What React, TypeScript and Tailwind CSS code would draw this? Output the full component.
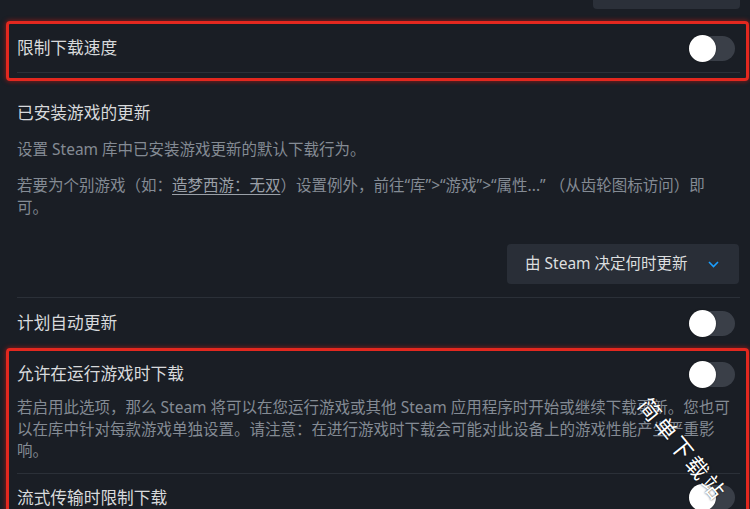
import React from "react";

const Toggle = () => (
  <div className="relative w-[46px] h-[25px] rounded-full bg-[#3a3f48] mr-[5px] shrink-0">
    <div className="absolute left-0 top-[-1px] w-[27px] h-[27px] rounded-full bg-white shadow-[0_0_2px_rgba(0,0,0,0.4)]" />
  </div>
);

const Divider = ({ className = "" }: { className?: string }) => (
  <div className={"h-px bg-[#2b3038] " + className} />
);

export default function App() {
  return (
    <div
      className="relative w-[750px] h-[509px] overflow-hidden bg-[#1a1e25] pl-[6px] pr-[1px] [text-spacing-trim:space-all]"
      style={{ fontFamily: '"Noto Sans", "Noto Sans CJK SC", sans-serif' }}
    >
      {/* previous row button (cropped) */}
      <div className="h-[9px] flex justify-end pr-[9px]">
        <div className="w-[147px] h-[9px] bg-[#2b3039] rounded-b-[4px]" />
      </div>

      {/* box 1 */}
      <div className="mt-[12px] border-[3px] border-[#e3281f] rounded-[4px] shadow-[0_0_4px_1px_rgba(190,25,20,0.55)] pl-[8px] pr-[6px] pb-[5px]">
        <div className="h-[48px] flex items-center justify-between">
          <span className="text-[16.7px] leading-[24px] text-[#d8dadc]">限制下载速度</span>
          <Toggle />
        </div>
        <Divider />
      </div>

      {/* installed game updates */}
      <div className="mt-[20px] pl-[11px] pr-[9px]">
        <div className="text-[16.7px] leading-[24px] text-[#d8dadc]">已安装游戏的更新</div>
        <div className="mt-[13px] text-[15.5px] leading-[22px] text-[#848b94]">
          设置 Steam 库中已安装游戏更新的默认下载行为。
        </div>
        <div className="mt-[14px] text-[15.5px] leading-[22px] text-[#848b94]">
          若要为个别游戏（如：<span className="underline underline-offset-[3px] text-[#9aa0a8]">造梦西游：无双</span>）设置例外，前往“库”&gt;“游戏”&gt;“属性...” （从齿轮图标访问）即
          <br />
          可。
        </div>
        <div className="mt-[26px] flex justify-end">
          <div className="w-[232px] h-[40px] mr-[1px] rounded-[4px] bg-[#292e37] flex items-center justify-between pl-[18px] pr-[20px]">
            <span className="text-[15.5px] text-[#dcdedf]">由 Steam 决定何时更新</span>
            <svg width="11" height="7" viewBox="0 0 11 7" fill="none">
              <path d="M1 1l4.5 4.5L10 1" stroke="#1a9fff" strokeWidth="1.6" />
            </svg>
          </div>
        </div>
        <Divider className="mt-[13px]" />
        <div className="h-[50px] flex items-center justify-between">
          <span className="text-[16.7px] leading-[24px] text-[#d8dadc]">计划自动更新</span>
          <Toggle />
        </div>
      </div>

      {/* box 2 */}
      <div className="border-[3px] border-[#e3281f] rounded-[4px] shadow-[0_0_4px_1px_rgba(190,25,20,0.55)] pl-[8px] pr-[6px]">
        <div className="h-[46px] flex items-center justify-between">
          <span className="text-[16.7px] leading-[24px] text-[#d8dadc]">允许在运行游戏时下载</span>
          <Toggle />
        </div>
        <div className="text-[15.5px] leading-[21.5px] text-[#848b94]">
          若启用此选项，那么 Steam 将可以在您运行游戏或其他 Steam 应用程序时开始或继续下载更新。您也可以在库中针对每款游戏单独设置。请注意：在进行游戏时下载会可能对此设备上的游戏性能产生严重影响。
        </div>
        <Divider className="mt-[11px]" />
        <div className="h-[48px] flex items-center justify-between">
          <span className="text-[16.7px] leading-[24px] text-[#d8dadc]">流式传输时限制下载</span>
          <Toggle />
        </div>
      </div>

      {/* watermark */}
      <div
        className="absolute left-[621px] top-[436px] w-[125px] h-[25px] flex items-center justify-center text-[22px] leading-[25px] tracking-[3px] text-white rotate-[51deg] [text-shadow:0_0_2px_rgba(0,0,0,0.8)]"
        style={{ fontFamily: '"Noto Sans CJK SC", sans-serif' }}
      >
        简单下载站
      </div>
    </div>
  );
}
